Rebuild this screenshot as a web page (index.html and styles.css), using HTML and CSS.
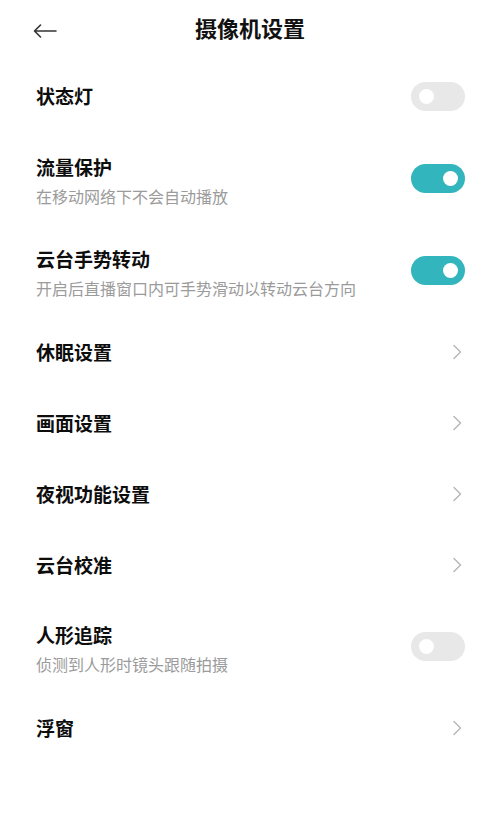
FILE: index.html
```html
<!DOCTYPE html>
<html lang="zh-CN">
  <head>
    <meta charset="UTF-8" />
    <meta name="viewport" content="width=device-width, initial-scale=1.0" />
    <title>摄像机设置</title>
    <link rel="stylesheet" href="styles.css">
  </head>

  <body>
    <header class="topbar">
      <button type="button" class="back" aria-label="返回">
        <svg width="24" height="14" viewBox="0 0 24 14">
          <path d="M23 7H1.5M7.5 1L1.5 7l6 6" fill="none" stroke="#333" stroke-width="1.6" stroke-linecap="round" stroke-linejoin="round" />
        </svg>
      </button>
      <h1>摄像机设置</h1>
      <span></span>
    </header>

    <ul class="settings">
      <li class="row first">
        <div class="label">
          <div class="name">状态灯</div>
        </div>
        <span class="switch"></span>
      </li>
      <li class="row two">
        <div class="label">
          <div class="name">流量保护</div>
          <div class="desc">在移动网络下不会自动播放</div>
        </div>
        <span class="switch on"></span>
      </li>
      <li class="row two">
        <div class="label">
          <div class="name">云台手势转动</div>
          <div class="desc">开启后直播窗口内可手势滑动以转动云台方向</div>
        </div>
        <span class="switch on"></span>
      </li>
      <li class="row">
        <div class="label">
          <div class="name">休眠设置</div>
        </div>
        <svg class="chevron" width="10" height="16" viewBox="0 0 10 16">
          <path d="M2 1.5L8.5 8L2 14.5" fill="none" stroke="#b5b5b5" stroke-width="1.4" stroke-linecap="round" stroke-linejoin="round" />
        </svg>
      </li>
      <li class="row">
        <div class="label">
          <div class="name">画面设置</div>
        </div>
        <svg class="chevron" width="10" height="16" viewBox="0 0 10 16">
          <path d="M2 1.5L8.5 8L2 14.5" fill="none" stroke="#b5b5b5" stroke-width="1.4" stroke-linecap="round" stroke-linejoin="round" />
        </svg>
      </li>
      <li class="row">
        <div class="label">
          <div class="name">夜视功能设置</div>
        </div>
        <svg class="chevron" width="10" height="16" viewBox="0 0 10 16">
          <path d="M2 1.5L8.5 8L2 14.5" fill="none" stroke="#b5b5b5" stroke-width="1.4" stroke-linecap="round" stroke-linejoin="round" />
        </svg>
      </li>
      <li class="row">
        <div class="label">
          <div class="name">云台校准</div>
        </div>
        <svg class="chevron" width="10" height="16" viewBox="0 0 10 16">
          <path d="M2 1.5L8.5 8L2 14.5" fill="none" stroke="#b5b5b5" stroke-width="1.4" stroke-linecap="round" stroke-linejoin="round" />
        </svg>
      </li>
      <li class="row two">
        <div class="label">
          <div class="name">人形追踪</div>
          <div class="desc">侦测到人形时镜头跟随拍摄</div>
        </div>
        <span class="switch"></span>
      </li>
      <li class="row">
        <div class="label">
          <div class="name">浮窗</div>
        </div>
        <svg class="chevron" width="10" height="16" viewBox="0 0 10 16">
          <path d="M2 1.5L8.5 8L2 14.5" fill="none" stroke="#b5b5b5" stroke-width="1.4" stroke-linecap="round" stroke-linejoin="round" />
        </svg>
      </li>
    </ul>

    <script>
      document.querySelectorAll(".switch").forEach((el) => {
        el.addEventListener("click", () => el.classList.toggle("on"));
      });
    </script>
  </body>
</html>
```

FILE: styles.css
```css
body {
  margin: 0;
  background-color: #fff;
  font-family: "Noto Sans CJK SC", "Noto Sans", sans-serif;
  color: #111;
}

.topbar {
  height: 60px;
  padding: 0 33px 6px;
  display: grid;
  grid-template-columns: 1fr auto 1fr;
  align-items: center;
  box-sizing: border-box;
}

.back {
  justify-self: start;
  display: flex;
  padding: 0;
  margin-top: 7px;
  border: none;
  background: none;
  cursor: pointer;
}

.topbar h1 {
  margin: 0;
  font-size: 22px;
  font-weight: 700;
  line-height: 30px;
  color: #111;
}

.settings {
  list-style: none;
  margin: 0;
  padding: 0;
}

.row {
  height: 71px;
  padding: 0 35px 0 36px;
  display: flex;
  align-items: center;
  justify-content: space-between;
  box-sizing: border-box;
}

.row.first {
  height: 72px;
}

.row.two {
  height: 92px;
}

.row.two .label {
  margin-top: 5px;
}

.name {
  font-size: 19px;
  font-weight: 700;
  line-height: 26px;
  color: #0d0d0d;
}

.desc {
  margin-top: 5px;
  font-size: 16px;
  line-height: 22px;
  color: #9b9b9b;
}

.switch {
  position: relative;
  width: 54px;
  height: 29px;
  border-radius: 15px;
  background-color: #e8e8e8;
  flex-shrink: 0;
  cursor: pointer;
}

.switch::after {
  content: "";
  position: absolute;
  top: 7px;
  left: 8px;
  width: 15px;
  height: 15px;
  border-radius: 50%;
  background-color: #fff;
}

.switch.on {
  background-color: #33b5bd;
}

.switch.on::after {
  left: auto;
  right: 7px;
}

.chevron {
  margin-right: 3px;
  flex-shrink: 0;
}
```
